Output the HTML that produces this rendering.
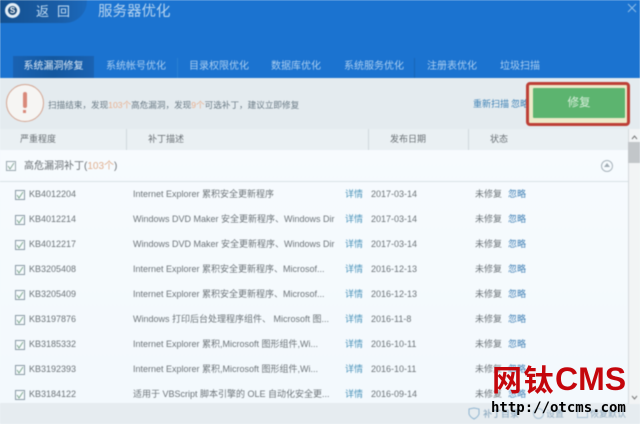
<!DOCTYPE html>
<html><head><meta charset="utf-8"><style>
*{margin:0;padding:0;box-sizing:border-box}
html,body{width:640px;height:424px;overflow:hidden;background:#f4f9fd}
body{position:relative;font-family:"Liberation Sans","Noto Sans CJK SC",sans-serif;color:#666;font-size:9px}
#w{position:absolute;inset:0;filter:blur(.5px)}
.a{position:absolute;white-space:nowrap}
.tab{position:absolute;top:56px;height:22px;line-height:21px;font-size:10px;color:#a9cdf0;text-align:center}
.r{position:absolute;left:0;width:628px;height:25px;line-height:25px;font-size:9px;color:#6d7479}
.r span{position:absolute;top:0;white-space:nowrap}
.cb{position:absolute;left:15px;top:8px;width:10px;height:10px;border:1px solid #8a9aa5;background:#f7fbfd}
.cb svg,.cbg svg{position:absolute;left:0;top:0}
.l{color:#4a93ba}.g{color:#3f7fb5}
.h{position:absolute;top:129px;height:21px;line-height:21px;font-size:9px;color:#6a7075}
.sep{position:absolute;top:129px;width:1px;height:21px;background:#d0d8dd}
</style></head><body><div id="w">
<div class="a" style="left:0;top:0;width:640px;height:78px;background:#1b73d0"></div>
<div class="a" style="left:0;top:0;width:87px;height:23px;background:linear-gradient(90deg,#14508f,#1a5ea8 70%,#1b69bd);border-radius:0 0 22px 0"></div>
<div class="a" style="left:5px;top:3px;width:15px;height:15px;border-radius:50%;background:#e4eef6"></div>
<div class="a" style="left:8px;top:6px;width:9px;height:9px;border-radius:50%;background:#1c4a78;color:#fff;font-size:8px;line-height:9px;text-align:center;font-weight:bold">S</div>
<div class="a" style="left:36px;top:3px;font-size:13px;line-height:18px;color:#c3ddf3">返</div>
<div class="a" style="left:57px;top:3px;font-size:13px;line-height:18px;color:#c3ddf3">回</div>
<div class="a" style="left:98px;top:2px;font-size:14.5px;line-height:20px;color:#b5d3ef">服务器优化</div>
<svg class="a" style="left:626px;top:2px" width="12" height="12"><path d="M2 2L10 10M10 2L2 10" stroke="#8fbde8" stroke-width="1"/></svg>

<div class="a" style="left:13px;top:56px;width:81px;height:22px;background:linear-gradient(90deg,#1a62b2,#14589f 50%,#1a62b2)"></div>
<div class="tab" style="left:13px;width:81px;color:#dce9f5">系统漏洞修复</div>
<div class="tab" style="left:96px;width:80px">系统帐号优化</div>
<div class="tab" style="left:179px;width:80px">目录权限优化</div>
<div class="tab" style="left:261px;width:70px">数据库优化</div>
<div class="tab" style="left:334px;width:80px">系统服务优化</div>
<div class="tab" style="left:417px;width:70px">注册表优化</div>
<div class="tab" style="left:490px;width:60px">垃圾扫描</div>
<div class="a" style="left:177px;top:58px;width:1px;height:20px;background:#2a80d4"></div>
<div class="a" style="left:414px;top:58px;width:1px;height:20px;background:#1865b6"></div>

<div class="a" style="left:0;top:78px;width:640px;height:51px;background:#e4ebef"></div>
<div class="a" style="left:6px;top:84px;width:38px;height:38px;border-radius:50%;border:1.5px solid #d3a592;background:#f6f5f3"></div>
<div class="a" style="left:22.5px;top:92px;width:4px;height:16px;background:#d9897a;border-radius:2px"></div>
<div class="a" style="left:23px;top:110px;width:3px;height:3px;background:#d9897a"></div>
<div class="a" style="left:48px;top:98px;font-size:8.6px;line-height:14px;color:#6a7a85">扫描结束，发现<span style="color:#e8b08f">103个</span>高危漏洞，发现<span style="color:#e8b08f">9个</span>可选补丁，建议立即修复</div>
<div class="a" style="left:473px;top:97px;font-size:9px;line-height:14px;color:#3f82b5">重新扫描</div>
<div class="a" style="left:511px;top:97px;width:16px;overflow:hidden;font-size:9px;line-height:14px;color:#3f82b5">忽略</div>
<div class="a" style="left:526px;top:82px;width:104px;height:44px;border:3px solid #bd3f36;border-radius:4px;background:#ede9c8"></div>
<div class="a" style="left:533px;top:88px;width:92px;height:30px;background:#5cb46f;border-radius:1px;color:#d8eedb;font-size:11.5px;line-height:30px;text-align:center">修复</div>

<div class="a" style="left:0;top:129px;width:628px;height:21px;background:#eaf0f3"></div>
<div class="h" style="left:20px">严重程度</div><div class="sep" style="left:126px"></div>
<div class="h" style="left:148px">补丁描述</div><div class="sep" style="left:368px"></div>
<div class="h" style="left:390px">发布日期</div><div class="sep" style="left:468px"></div>
<div class="h" style="left:490px">状态</div>

<div class="a" style="left:0;top:150px;width:628px;height:254px;background:linear-gradient(#f7fbfe,#f3f9fd)"></div>
<div class="a" style="left:0;top:181px;width:628px;height:1px;background:#d9e1e6"></div>
<div class="cbg a" style="left:6px;top:161px;width:10px;height:10px;border:1px solid #9aa8b0;background:#f7fbfd"><svg width="8" height="8"><path d="M1 4L3 7L7 1" fill="none" stroke="#8aa89a"/></svg></div>
<div class="a" style="left:24px;top:159px;font-size:10px;line-height:15px;color:#6a7075">高危漏洞补丁(<span style="color:#e0b090">103个</span>)</div>
<div class="a" style="left:601px;top:160px;width:12px;height:12px;border-radius:50%;border:1px solid #a8b4bc"></div>
<div class="a" style="left:604px;top:163px;width:0;height:0;border:3px solid transparent;border-bottom:4px solid #a0acb4;border-top:0"></div>

<div class="r" style="top:182px"><i class="cb"><svg width="8" height="8"><path d="M1 4L3 7L7 1" fill="none" stroke="#7fa890"/></svg></i><span style="left:29px">KB4012204</span><span style="left:133px;">Internet Explorer 累积安全更新程序</span><span class="l" style="left:345px">详情</span><span style="left:371px">2017-03-14</span><span style="left:475px">未修复</span><span class="g" style="left:508px">忽略</span></div>
<div class="r" style="top:207px"><i class="cb"><svg width="8" height="8"><path d="M1 4L3 7L7 1" fill="none" stroke="#7fa890"/></svg></i><span style="left:29px">KB4012214</span><span style="left:133px;width:203px;overflow:hidden">Windows DVD Maker 安全更新程序、Windows Dir</span><span class="l" style="left:345px">详情</span><span style="left:371px">2017-03-14</span><span style="left:475px">未修复</span><span class="g" style="left:508px">忽略</span></div>
<div class="r" style="top:232px"><i class="cb"><svg width="8" height="8"><path d="M1 4L3 7L7 1" fill="none" stroke="#7fa890"/></svg></i><span style="left:29px">KB4012217</span><span style="left:133px;width:203px;overflow:hidden">Windows DVD Maker 安全更新程序、Windows Dir</span><span class="l" style="left:345px">详情</span><span style="left:371px">2017-03-14</span><span style="left:475px">未修复</span><span class="g" style="left:508px">忽略</span></div>
<div class="r" style="top:257px"><i class="cb"><svg width="8" height="8"><path d="M1 4L3 7L7 1" fill="none" stroke="#7fa890"/></svg></i><span style="left:29px">KB3205408</span><span style="left:133px">Internet Explorer 累积安全更新程序、Microsof...</span><span class="l" style="left:345px">详情</span><span style="left:371px">2016-12-13</span><span style="left:475px">未修复</span><span class="g" style="left:508px">忽略</span></div>
<div class="r" style="top:282px"><i class="cb"><svg width="8" height="8"><path d="M1 4L3 7L7 1" fill="none" stroke="#7fa890"/></svg></i><span style="left:29px">KB3205409</span><span style="left:133px">Internet Explorer 累积安全更新程序、Microsof...</span><span class="l" style="left:345px">详情</span><span style="left:371px">2016-12-13</span><span style="left:475px">未修复</span><span class="g" style="left:508px">忽略</span></div>
<div class="r" style="top:307px"><i class="cb"><svg width="8" height="8"><path d="M1 4L3 7L7 1" fill="none" stroke="#7fa890"/></svg></i><span style="left:29px">KB3197876</span><span style="left:133px">Windows 打印后台处理程序组件、 Microsoft 图...</span><span class="l" style="left:345px">详情</span><span style="left:371px">2016-11-8</span><span style="left:475px">未修复</span><span class="g" style="left:508px">忽略</span></div>
<div class="r" style="top:332px"><i class="cb"><svg width="8" height="8"><path d="M1 4L3 7L7 1" fill="none" stroke="#7fa890"/></svg></i><span style="left:29px">KB3185332</span><span style="left:133px">Internet Explorer 累积,Microsoft 图形组件,Wi...</span><span class="l" style="left:345px">详情</span><span style="left:371px">2016-10-11</span><span style="left:475px">未修复</span><span class="g" style="left:508px">忽略</span></div>
<div class="r" style="top:357px"><i class="cb"><svg width="8" height="8"><path d="M1 4L3 7L7 1" fill="none" stroke="#7fa890"/></svg></i><span style="left:29px">KB3192393</span><span style="left:133px">Internet Explorer 累积,Microsoft 图形组件,Wi...</span><span class="l" style="left:345px">详情</span><span style="left:371px">2016-10-11</span><span style="left:475px">未修复</span><span class="g" style="left:508px">忽略</span></div>
<div class="r" style="top:382px"><i class="cb"><svg width="8" height="8"><path d="M1 4L3 7L7 1" fill="none" stroke="#7fa890"/></svg></i><span style="left:29px">KB3184122</span><span style="left:133px">适用于 VBScript 脚本引擎的 OLE 自动化安全更...</span><span class="l" style="left:345px">详情</span><span style="left:371px">2016-09-14</span><span style="left:475px">未修复</span><span class="g" style="left:508px">忽略</span></div>

<div class="a" style="left:0;top:403px;width:640px;height:21px;background:#e6ecf0"></div>
<svg class="a" style="left:468px;top:407px" width="12" height="13"><path d="M1 2L6 1L11 2V7Q10 10 6 12Q2 10 1 7Z" fill="none" stroke="#8fb4d0"/></svg>
<div class="a" style="left:483px;top:408px;font-size:9px;line-height:12px;color:#7f9fb8">补丁目录</div>
<div class="a" style="left:533px;top:408px;width:11px;height:11px;border-radius:50%;border:1px solid #a9c2d4"></div>
<div class="a" style="left:546px;top:408px;font-size:9px;line-height:12px;color:#8fa9bd">设置</div>
<div class="a" style="left:577px;top:410px;width:11px;height:8px;border:1px solid #a9c2d4;border-top:0"></div>
<div class="a" style="left:590px;top:408px;font-size:9px;line-height:12px;color:#8fa9bd">恢复默认</div>

<div class="a" style="left:628px;top:129px;width:12px;height:275px;background:#f2f4f5;border-left:1px solid #d5dadd"></div>
<svg class="a" style="left:629px;top:132px" width="11" height="11"><path d="M3 7L5.5 4L8 7" fill="none" stroke="#777"/></svg>
<div class="a" style="left:628px;top:142px;width:12px;height:21px;background:#c2c6c9"></div>
<svg class="a" style="left:629px;top:392px" width="11" height="11"><path d="M3 4L5.5 7L8 4" fill="none" stroke="#777"/></svg>
</div>
<div class="a" style="left:492px;top:364px;font-size:30px;line-height:36px;font-weight:bold;color:#c4060c;letter-spacing:1.5px;filter:blur(.3px)">网钛</div>
<div class="a" style="left:555px;top:361px;font-size:32px;line-height:36px;font-weight:bold;color:#c4060c;filter:blur(.3px)">CMS</div>
<div class="a" style="left:491px;top:398px;font-family:'DejaVu Sans Mono',monospace;font-size:14px;line-height:20px;font-weight:bold;color:#000">http://otcms.com</div>
</body></html>
